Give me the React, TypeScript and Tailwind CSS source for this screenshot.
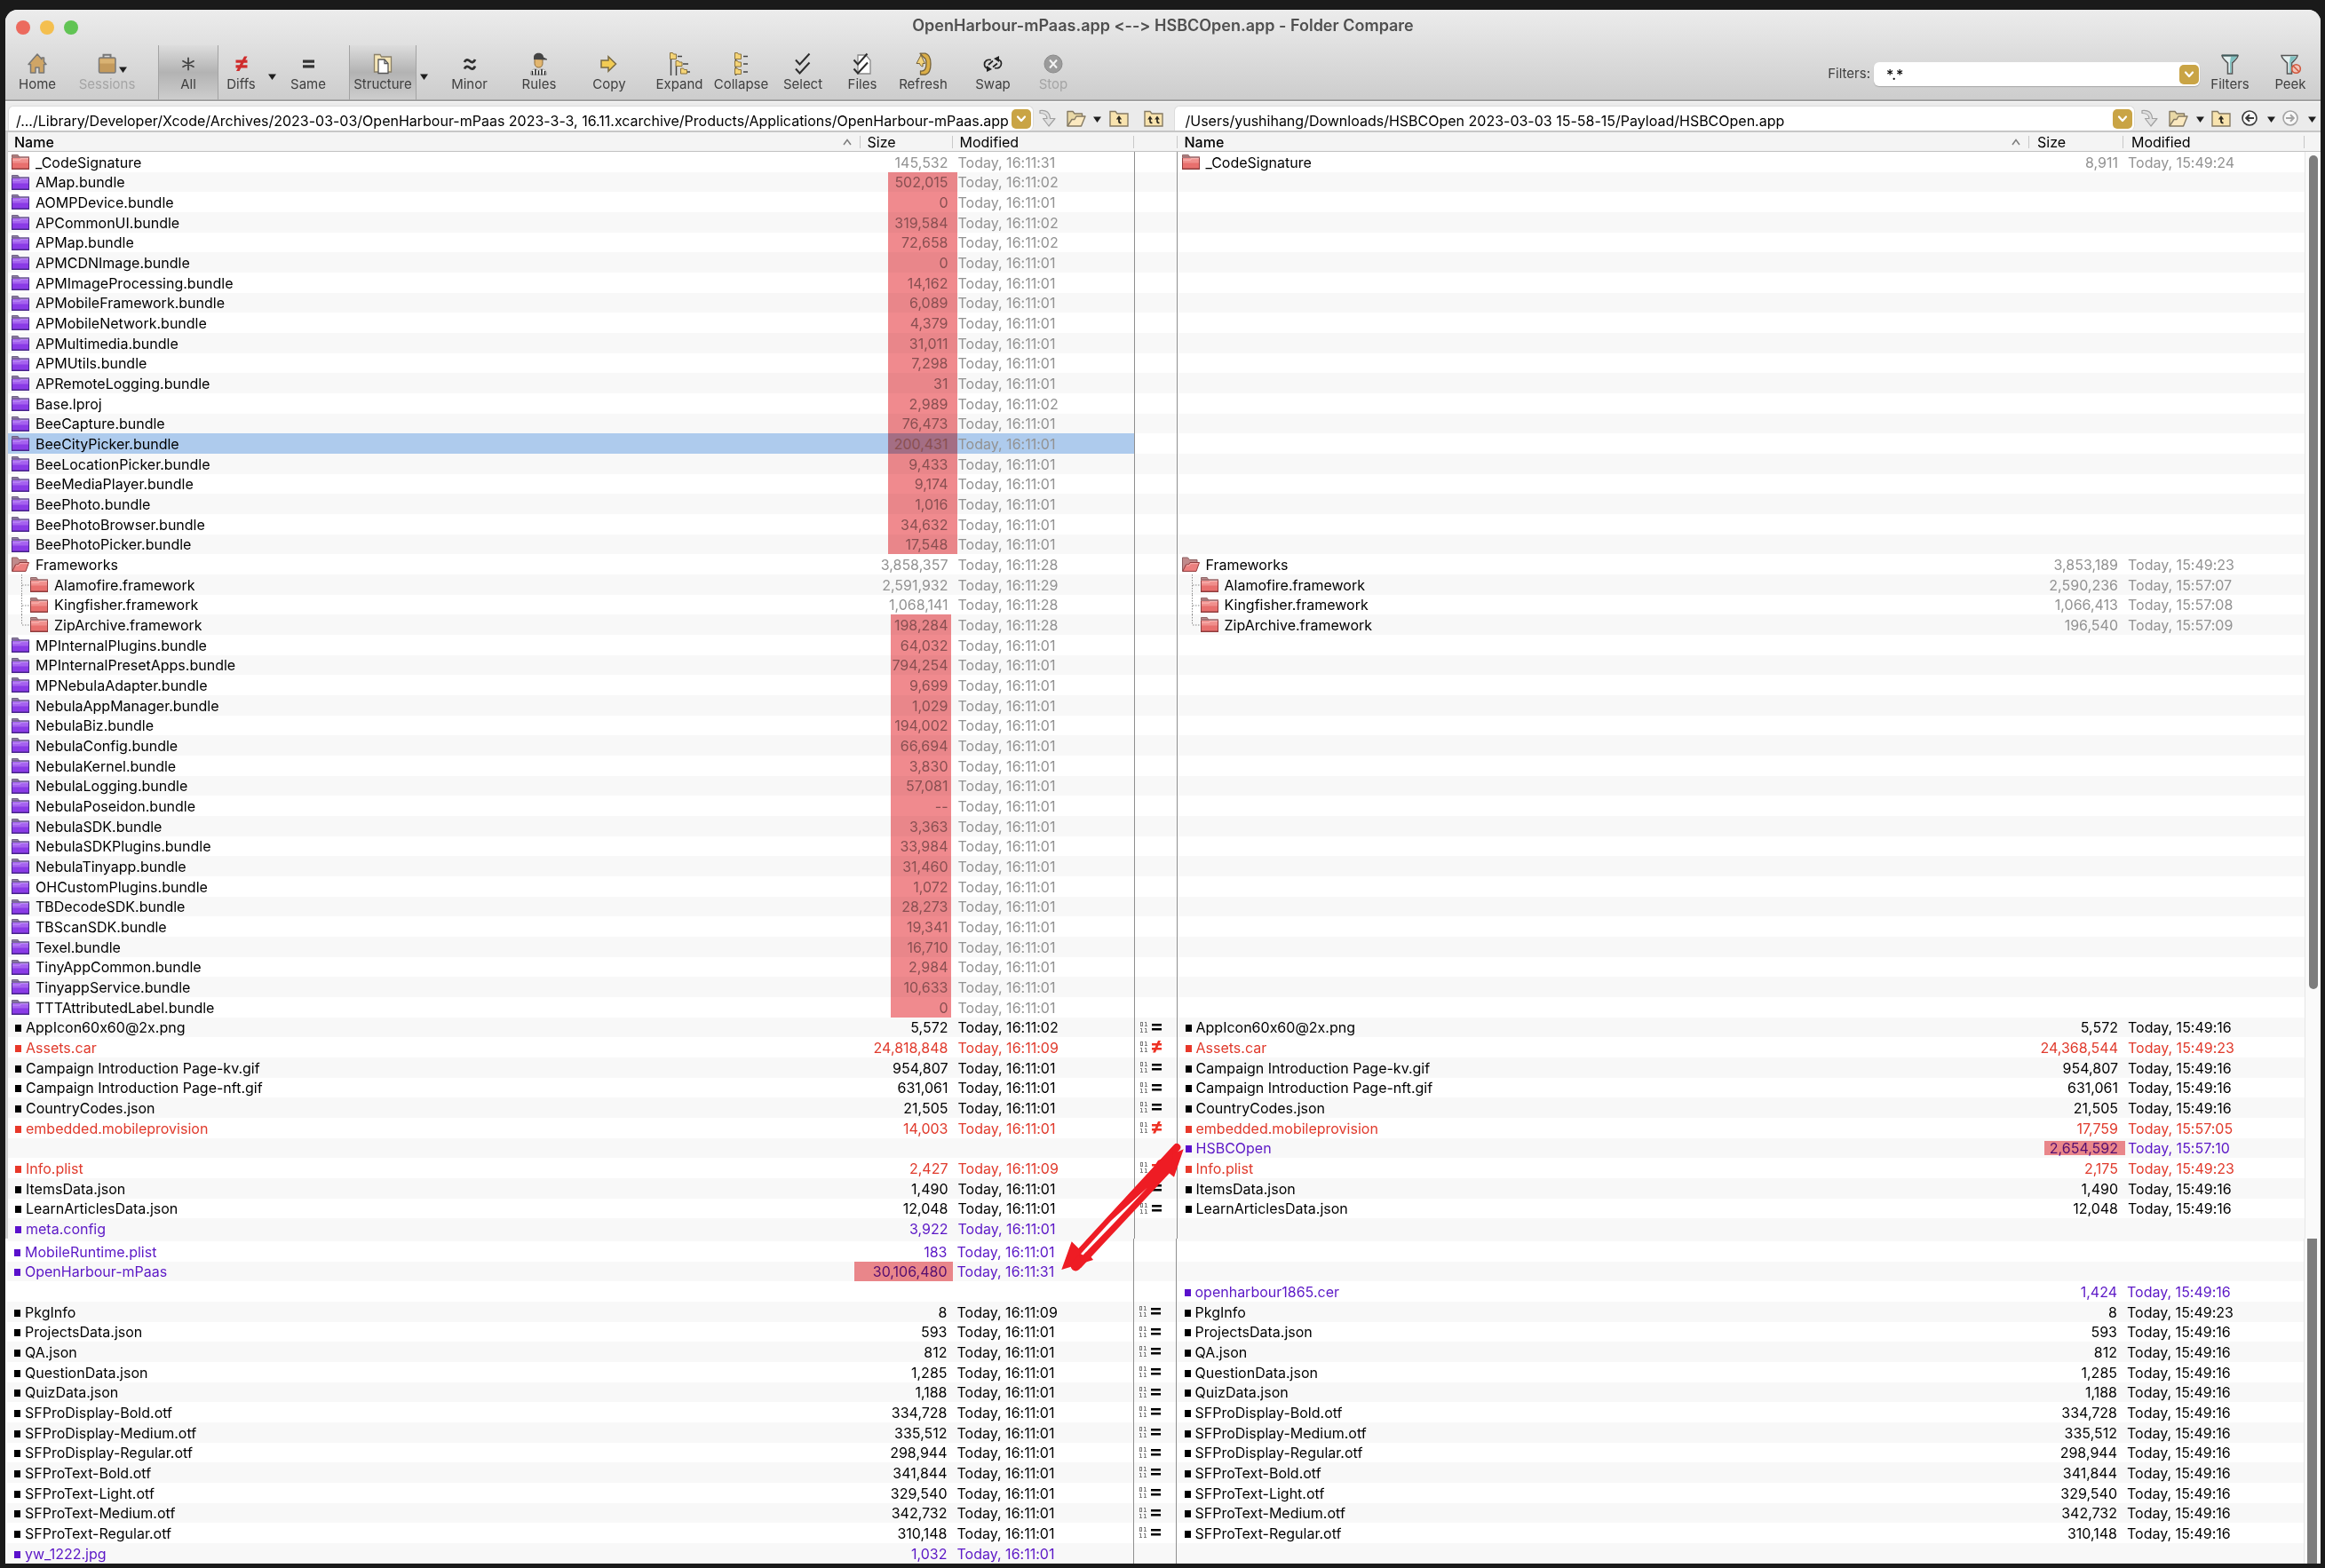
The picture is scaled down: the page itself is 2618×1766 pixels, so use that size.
import React from "react";

type Tone = "dim" | "black" | "red" | "purple";
type Entry = {
  name: string;
  kind: "same" | "only" | "open" | "child" | "last" | "file";
  size: string;
  time: string;
  tone: Tone;
};
type Row = { left?: Entry; right?: Entry; mark?: "eq" | "ne"; hl?: "wide" | "narrow" | "big"; hlRight?: boolean; selected?: boolean; arrow?: boolean };

const TONE: Record<Tone, string> = {
  dim: "text-[#929292]",
  black: "text-black",
  red: "text-[#e03a2c]",
  purple: "text-[#5b17c6]",
};
const BULLET: Record<Tone, string> = {
  dim: "bg-black",
  black: "bg-black",
  red: "bg-[#e8382a]",
  purple: "bg-[#5a10cc]",
};

const bundle = (name: string, size: string, time: string, hl: Row["hl"]): Row => ({
  left: { name, size, time: `Today, 16:11:${time}`, kind: "only", tone: "dim" },
  hl,
});
const shared = (
  name: string,
  kind: Entry["kind"],
  l: [string, string],
  r: [string, string],
  hl?: Row["hl"],
): Row => ({
  left: { name, kind, size: l[0], time: `Today, 16:11:${l[1]}`, tone: "dim" },
  right: { name, kind, size: r[0], time: `Today, 15:${r[1]}`, tone: "dim" },
  hl,
});
const same = (name: string, size: string, lt = "01", rt = "49:16"): Row => ({
  left: { name, kind: "file", size, time: `Today, 16:11:${lt}`, tone: "black" },
  right: { name, kind: "file", size, time: `Today, 15:${rt}`, tone: "black" },
  mark: "eq",
});
const diff = (name: string, ls: string, lt: string, rs: string, rt: string): Row => ({
  left: { name, kind: "file", size: ls, time: `Today, 16:11:${lt}`, tone: "red" },
  right: { name, kind: "file", size: rs, time: `Today, 15:${rt}`, tone: "red" },
  mark: "ne",
});
const orphan = (name: string, size: string, time: string): Entry => ({ name, kind: "file", size, time: `Today, ${time}`, tone: "purple" });

const UPPER: Row[] = [
  shared("_CodeSignature", "same", ["145,532", "31"], ["8,911", "49:24"]),
  bundle("AMap.bundle", "502,015", "02", "wide"),
  bundle("AOMPDevice.bundle", "0", "01", "wide"),
  bundle("APCommonUI.bundle", "319,584", "02", "wide"),
  bundle("APMap.bundle", "72,658", "02", "wide"),
  bundle("APMCDNImage.bundle", "0", "01", "wide"),
  bundle("APMImageProcessing.bundle", "14,162", "01", "wide"),
  bundle("APMobileFramework.bundle", "6,089", "01", "wide"),
  bundle("APMobileNetwork.bundle", "4,379", "01", "wide"),
  bundle("APMultimedia.bundle", "31,011", "01", "wide"),
  bundle("APMUtils.bundle", "7,298", "01", "wide"),
  bundle("APRemoteLogging.bundle", "31", "01", "wide"),
  bundle("Base.lproj", "2,989", "02", "wide"),
  bundle("BeeCapture.bundle", "76,473", "01", "wide"),
  { ...bundle("BeeCityPicker.bundle", "200,431", "01", "wide"), selected: true },
  bundle("BeeLocationPicker.bundle", "9,433", "01", "wide"),
  bundle("BeeMediaPlayer.bundle", "9,174", "01", "wide"),
  bundle("BeePhoto.bundle", "1,016", "01", "wide"),
  bundle("BeePhotoBrowser.bundle", "34,632", "01", "wide"),
  bundle("BeePhotoPicker.bundle", "17,548", "01", "wide"),
  shared("Frameworks", "open", ["3,858,357", "28"], ["3,853,189", "49:23"]),
  shared("Alamofire.framework", "child", ["2,591,932", "29"], ["2,590,236", "57:07"]),
  shared("Kingfisher.framework", "child", ["1,068,141", "28"], ["1,066,413", "57:08"]),
  shared("ZipArchive.framework", "last", ["198,284", "28"], ["196,540", "57:09"], "narrow"),
  bundle("MPInternalPlugins.bundle", "64,032", "01", "narrow"),
  bundle("MPInternalPresetApps.bundle", "794,254", "01", "narrow"),
  bundle("MPNebulaAdapter.bundle", "9,699", "01", "narrow"),
  bundle("NebulaAppManager.bundle", "1,029", "01", "narrow"),
  bundle("NebulaBiz.bundle", "194,002", "01", "narrow"),
  bundle("NebulaConfig.bundle", "66,694", "01", "narrow"),
  bundle("NebulaKernel.bundle", "3,830", "01", "narrow"),
  bundle("NebulaLogging.bundle", "57,081", "01", "narrow"),
  bundle("NebulaPoseidon.bundle", "--", "01", "narrow"),
  bundle("NebulaSDK.bundle", "3,363", "01", "narrow"),
  bundle("NebulaSDKPlugins.bundle", "33,984", "01", "narrow"),
  bundle("NebulaTinyapp.bundle", "31,460", "01", "narrow"),
  bundle("OHCustomPlugins.bundle", "1,072", "01", "narrow"),
  bundle("TBDecodeSDK.bundle", "28,273", "01", "narrow"),
  bundle("TBScanSDK.bundle", "19,341", "01", "narrow"),
  bundle("Texel.bundle", "16,710", "01", "narrow"),
  bundle("TinyAppCommon.bundle", "2,984", "01", "narrow"),
  bundle("TinyappService.bundle", "10,633", "01", "narrow"),
  bundle("TTTAttributedLabel.bundle", "0", "01", "narrow"),
  same("AppIcon60x60@2x.png", "5,572", "02"),
  diff("Assets.car", "24,818,848", "09", "24,368,544", "49:23"),
  same("Campaign Introduction Page-kv.gif", "954,807"),
  same("Campaign Introduction Page-nft.gif", "631,061"),
  same("CountryCodes.json", "21,505"),
  diff("embedded.mobileprovision", "14,003", "01", "17,759", "57:05"),
  { right: orphan("HSBCOpen", "2,654,592", "15:57:10"), hlRight: true, arrow: true },
  diff("Info.plist", "2,427", "09", "2,175", "49:23"),
  same("ItemsData.json", "1,490"),
  same("LearnArticlesData.json", "12,048"),
  { left: orphan("meta.config", "3,922", "16:11:01") },
];

const LOWER: Row[] = [
  { left: orphan("MobileRuntime.plist", "183", "16:11:01") },
  { left: orphan("OpenHarbour-mPaas", "30,106,480", "16:11:31"), hl: "big" },
  { right: orphan("openharbour1865.cer", "1,424", "15:49:16") },
  same("PkgInfo", "8", "09", "49:23"),
  same("ProjectsData.json", "593"),
  same("QA.json", "812"),
  same("QuestionData.json", "1,285"),
  same("QuizData.json", "1,188"),
  same("SFProDisplay-Bold.otf", "334,728"),
  same("SFProDisplay-Medium.otf", "335,512"),
  same("SFProDisplay-Regular.otf", "298,944"),
  same("SFProText-Bold.otf", "341,844"),
  same("SFProText-Light.otf", "329,540"),
  same("SFProText-Medium.otf", "342,732"),
  same("SFProText-Regular.otf", "310,148"),
  { left: orphan("yw_1222.jpg", "1,032", "16:11:01") },
];

function FolderIcon({ color }: { color: "red" | "purple" }) {
  const red = color === "red";
  return (
    <svg className="h-[17px] w-5 shrink-0" viewBox="0 0 20 17">
      <path d="M.5 .5h6.700l2 3.300H.5z" fill={red ? "#b98c8c" : "#94829f"} stroke={red ? "#8d6465" : "#6d6085"} strokeWidth="1" />
      <rect x="0" y="2.500" width="20" height="14.500" fill={red ? "#8e3b3c" : "#47258a"} />
      <rect x="0" y="2.500" width="19.500" height="1.500" fill={red ? "#a67a7c" : "#7d6c9c"} />
      <rect x="1" y="4" width="18" height="6" fill={red ? "#f08f8c" : "#a562ef"} />
      <rect x="1" y="9.500" width="18" height="6" fill={red ? "#e8706e" : "#8a3be6"} />
      <path d="M1 5.500h8l1.500-1.500H19v1.200h-8L9.500 6.700H1z" fill={red ? "#f7b3b0" : "#bb8af5"} />
    </svg>
  );
}

function OpenFolderIcon() {
  return (
    <svg className="h-[17px] w-5 shrink-0" viewBox="0 0 20 17">
      <path d="M.5 16.500V1h6l2 2.500h8.500V8" fill="#c08a8b" stroke="#8d5f60" />
      <path d="M.8 16.400 4.500 9l3-.2 1.500-2.300h10.500L16 16.400z" fill="#ec7f7e" stroke="#8e3b3c" />
      <path d="M5 10l3-.1 1.600-2.200h8.600" fill="none" stroke="#f7b3b0" />
    </svg>
  );
}

function TreeLine({ last }: { last: boolean }) {
  return (
    <svg className="h-[23px] w-[10px] shrink-0" viewBox="0 0 10 23">
      <path d={last ? "M.5 0v12" : "M.5 0v23"} stroke="#8a8a8a" strokeDasharray="1.500 1.500" />
      <path d="M1 12h9" stroke="#8a8a8a" strokeDasharray="1.500 1.500" />
    </svg>
  );
}

function NameCell({ entry, pad }: { entry?: Entry; pad: string }) {
  if (!entry) return null;
  const { kind, name, tone } = entry;
  if (kind === "file")
    return (
      <div className={`flex items-center gap-[5px] ${pad}`}>
        <span className={`mt-0.5 ml-1 h-2 w-[7px] shrink-0 ${BULLET[tone]}`} />
        <span className={TONE[tone]}>{name}</span>
      </div>
    );
  return (
    <div className={`flex items-center gap-[7px] text-black ${pad}`}>
      {kind === "child" || kind === "last" ? (
        <span className="-my-1 ml-[11px] flex items-center">
          <TreeLine last={kind === "last"} />
          <FolderIcon color="red" />
        </span>
      ) : kind === "open" ? (
        <OpenFolderIcon />
      ) : (
        <FolderIcon color={kind === "only" ? "purple" : "red"} />
      )}
      <span>{name}</span>
    </div>
  );
}

function Mark({ type }: { type: "eq" | "ne" }) {
  return (
    <svg className="ml-[5px] block h-[17px] w-[26px]" viewBox="0 0 26 17" role="img" aria-label={type === "eq" ? "Binary same" : "Binary different"}>
      <g fill="none" stroke="#7c7c7c" strokeWidth="1" shapeRendering="crispEdges">
        <rect x="1.500" y="2.500" width="2" height="4" />
        <path d="M7.500 2v5M6 2.500h2M6 6.500h3M2.500 9v5M1 9.500h2M1 13.500h3M7.500 9v5M6 9.500h2M6 13.500h3" />
      </g>
      {type === "eq" ? (
        <path d="M14 4h11v2.500H14zM14 9h11v2.500H14z" fill="#000" />
      ) : (
        <path d="M14 4h11v2.500H14zM14 9h11v2.500H14zM21 1h3L18 14.500h-3z" fill="#ee3224" />
      )}
    </svg>
  );
}

function Arrow() {
  return (
    <svg className="pointer-events-none absolute top-[3px] left-[-87px] z-10 h-[150px] w-[150px] max-w-none" viewBox="0 0 150 150">
      <g fill="#ee1c24">
        <path d="M4.300 145 15.700 113.300 23.500 121 131 4.200A4.300 4.300 0 0 1 137.500 9.800L34 126l6 8z" />
        <path d="M141.700 9.300 131 40.700 124 35 24.500 144.500A5 5 0 0 1 16 137L112 34l-5-3 6-9z" />
        <path d="M24 121 130 6 128 34 26 143z" />
      </g>
      <path d="M26 127.300 60 90 101 52.500 62 94 28.500 128.500z" fill="#fff" />
    </svg>
  );
}

const HL = {
  wide: "left-[31px] right-[-5px] inset-y-0",
  narrow: "left-[34px] right-[2px] inset-y-0",
  big: "left-[-6px] right-[-1px] inset-y-0",
};

function Cols() {
  return (
    <colgroup>
      <col />
      <col className="w-[104px]" />
      <col className="w-[204px]" />
      <col className="w-[49px]" />
      <col />
      <col className="w-[106px]" />
      <col className="w-[204px]" />
    </colgroup>
  );
}

function Rows({ rows }: { rows: Row[] }) {
  return (
    <tbody>
      {rows.map((row, i) => {
        const sel = row.selected ? "bg-[#aecbed]" : "";
        return (
          <tr key={i} className="h-[23px] leading-[22px] even:bg-[#f8f8f8] nth-[3n+2]:h-[22px]">
            <td className={sel}>
              <NameCell entry={row.left} pad="pl-1" />
            </td>
            <td className={`relative pr-[5px] text-right ${sel} ${row.left ? TONE[row.left.tone] : ""}`}>
              {row.left?.size}
              {row.hl && <span className={`absolute bg-[#f08a8e] mix-blend-multiply ${HL[row.hl]}`} />}
            </td>
            <td className={`pl-[6px] ${sel} ${row.left ? TONE[row.left.tone] : ""}`}>{row.left?.time}</td>
            <td className="relative border-x border-[#8f8f8f]">
              {row.mark && <Mark type={row.mark} />}
              {row.arrow && <Arrow />}
            </td>
            <td>
              <NameCell entry={row.right} pad="pl-[5px]" />
            </td>
            <td className={`relative pr-[6px] text-right ${row.right ? TONE[row.right.tone] : ""}`}>
              {row.right?.size}
              {row.hlRight && <span className="absolute top-[3px] right-[-2px] bottom-[3px] left-[17px] bg-[#f08a8e] mix-blend-multiply" />}
            </td>
            <td className={`pl-[5px] ${row.right ? TONE[row.right.tone] : ""}`}>{row.right?.time}</td>
          </tr>
        );
      })}
    </tbody>
  );
}

function Head({ label, sorted = false, pad }: { label: string; sorted?: boolean; pad: string }) {
  return (
    <th scope="col" className="text-left font-normal">
      <div className={`flex h-[22px] items-center border-b border-[#c2c2c2] bg-[#f4f4f4] ${pad} ${sorted ? "font-medium" : ""}`}>
        <span className="flex-1">{label}</span>
        {sorted && (
          <svg className="mr-[9px] h-2 w-[10px]" viewBox="0 0 10 8" fill="none" stroke="#7c7c7c" strokeWidth="1.500">
            <path d="m1 7 4-5.500L9 7" />
          </svg>
        )}
        <span className="h-[14px] w-px bg-[#c8c8c8]" />
      </div>
    </th>
  );
}

function Caret() {
  return (
    <svg className="h-[7px] w-[9px]" viewBox="0 0 9 7">
      <path d="M0 .5h9L4.500 7z" fill="#1e1e1e" />
    </svg>
  );
}

function ToolButton({ label, width, icon, disabled, active }: { label: string; width: string; icon: React.ReactNode; disabled?: boolean; active?: boolean }) {
  return (
    <button
      type="button"
      disabled={disabled}
      aria-pressed={active}
      className={`flex h-[61px] shrink-0 flex-col items-center pt-[9px] text-[15px] leading-5 ${width} ${disabled ? "text-[#a5a5a5]" : "text-[#3f3f3f]"} ${
        active ? "bg-linear-to-b from-[#dddddd] via-[#b3b3b3] to-[#cdcdcd] shadow-[inset_1px_0_0_#a3a3a3,inset_-1px_0_0_#a3a3a3]" : ""
      }`}
    >
      <span className="flex h-6 items-center justify-center">{icon}</span>
      <span className="mt-px">{label}</span>
    </button>
  );
}

const svg = "h-[26px] w-[26px]";
const I = {
  home: (
    <svg className={svg} viewBox="0 0 26 26">
      <path d="M13 2 3 13.500h2.500V23H11v-6h4v6h5.500v-9.500H23l-2.500-3V6H18v1.800z" fill="#cfa566" stroke="#777" strokeWidth="1.500" strokeLinejoin="round" />
    </svg>
  ),
  sessions: (
    <svg className={svg} viewBox="0 0 26 26">
      <path d="M8.500 6V2.800h8V6" fill="none" stroke="#777" strokeWidth="2" />
      <rect x="3.500" y="6" width="18.500" height="17" rx="1.500" fill="#c49a5c" stroke="#7a7a7a" strokeWidth="1.500" />
      <path d="M4.500 7.500h16.500v5h-16.500z" fill="#d9b273" />
    </svg>
  ),
  all: (
    <svg className={svg} viewBox="0 0 26 26" stroke="#444" strokeWidth="1.800" strokeLinecap="round">
      <path d="M13 6.500v13M7 9.800l12 6.400M19 9.800 7 16.200" />
    </svg>
  ),
  diffs: (
    <svg className={svg} viewBox="0 0 26 26" fill="#cf2d2d">
      <path d="M6.500 8.500h13v3.300h-13zM6.500 14.300h13v3.300h-13zM16 4.500h3.500L10.500 21H7z" />
    </svg>
  ),
  same: (
    <svg className={svg} viewBox="0 0 26 26" fill="#333">
      <path d="M7 8.500h13v3.200H7zM7 14.300h13v3.200H7z" />
    </svg>
  ),
  structure: (
    <svg className={svg} viewBox="0 0 26 26" stroke="#8a8068" strokeWidth="1.300">
      <path d="M3.500 22V2.500H10l1.500 2.500h11V22z" fill="#f5e6b8" />
      <path d="M8 8h7l4 4.500v11H8z" fill="#fff" stroke="#555" />
      <path d="M15 8v4.500h4" fill="none" stroke="#555" />
    </svg>
  ),
  minor: (
    <svg className={svg} viewBox="0 0 26 26" fill="none" stroke="#2f2f2f" strokeWidth="2.800">
      <path d="M7 11c1.500-3.500 4-3 6-1.200s4.500 2 6-1.800M7 18.500c1.500-3.500 4-3 6-1.200s4.500 2 6-1.800" />
    </svg>
  ),
  rules: (
    <svg className={svg} viewBox="0 0 26 26">
      <path d="M8 6h9v6.500c0 3-2 4.500-4.500 4.500S8 15 8 12.500z" fill="#e2b66f" stroke="#8a6a3a" />
      <path d="M7 8V5.500C7 2.500 9.500.8 12.500.8S18 2.500 18 5.500l4 2v1z" fill="#444" />
      <path d="M3.500 25c0-4 2-6 6-6.500l3 2 3-2c4 .5 6 2.500 6 6.500z" fill="#fff" stroke="#777" strokeWidth=".6" />
      <path d="M5.500 21v4.500M9 19v6.500M12.500 20.500v5M16 19v6.500M19.500 21v4.500" stroke="#222" strokeWidth="1.600" />
    </svg>
  ),
  copy: (
    <svg className={svg} viewBox="0 0 26 26">
      <path d="M4 9h8V4.800l8.500 8.200-8.500 8.200V17H4z" fill="#f2cb53" stroke="#7a6a42" strokeWidth="1.500" />
    </svg>
  ),
  expand: (
    <svg className={svg} viewBox="0 0 26 26">
      <path d="M3.500 8v18M9.500 15v11M11 4.500h5M17 13h6M22 22h3" stroke="#444" strokeWidth="1.500" />
      <g fill="#f4d376" stroke="#8a733c">
        <path d="M2.500 7.500v-7h3l1 1.500h3v5.500zM9 15.500v-6h3l1 1.500h3v4.500zM14.500 24v-6h3l1 1.500h3V24z" />
      </g>
    </svg>
  ),
  collapse: (
    <svg className={svg} viewBox="0 0 26 26">
      <path d="M6.500 6v20M15 4.500h5M15 13h5M15 22h5" stroke="#444" strokeWidth="1.500" />
      <g fill="#f4d376" stroke="#8a733c">
        <path d="M5.500 7.500v-7h3l1 1.500h3v5.500zM5.500 16V9.500h3L9.500 11h3v5zM5.500 24.500V18h3l1 1.500h3v5z" />
      </g>
    </svg>
  ),
  select: (
    <svg className={svg} viewBox="0 0 26 26" fill="none" stroke="#2c2c2c" strokeWidth="2">
      <path d="m5 8.500 4.500 5L20.500 1.500M5 18.500l4.500 5 11-12" />
    </svg>
  ),
  files: (
    <svg className={svg} viewBox="0 0 26 26" fill="none" stroke="#2c2c2c" strokeWidth="2">
      <path d="M8 3h9l5 6v15H8z" fill="#fff" stroke="#888" strokeWidth="1.300" />
      <path d="m3.500 8.500 4.500 5L18.500 1.500M3.500 18.500l4.500 5 11-12" />
    </svg>
  ),
  refresh: (
    <svg className={svg} viewBox="0 0 26 26">
      <path d="M9 1.200h6c4 1 6 5 6 11.800s-2 11-6 12H9.500v-4c5 .5 6.500-3 6.500-8s-.5-6.500-2.500-7z" fill="#dcaf47" stroke="#75623a" strokeWidth="1.300" strokeLinejoin="round" />
      <path d="M5 12.500h3.500c.5 2 1.500 3 3.500 3.500v-3.500h2.500L10 3z" fill="#f2d27a" stroke="#75623a" strokeLinejoin="round" />
    </svg>
  ),
  swap: (
    <svg className={svg} viewBox="0 0 26 26" fill="none" stroke="#222" strokeWidth="1.700">
      <path d="M11 8.500c-4.500-1-7.500 1.500-7.500 5 0 2.500 1.500 4 4 4.500M15 17.500c4.500 1 7.500-1.500 7.500-5 0-2.500-1.500-4-4-4.500M8 14l5-4.500M13 16.500l5-4" />
      <path d="M6 15v7l6-3zM20 11V4l-6 3z" fill="#222" stroke="none" />
    </svg>
  ),
  stop: (
    <svg className={svg} viewBox="0 0 26 26">
      <circle cx="13" cy="13" r="10" fill="#9b9b9b" stroke="#8a8a8a" />
      <path d="m9 8.500 8 9M17 8.500l-8 9" stroke="#f4f4f4" strokeWidth="2" />
    </svg>
  ),
  filters: (
    <svg className={svg} viewBox="0 0 26 26">
      <path d="M4 3.500h18c-.5 4-5 6.500-6.500 8.500v12h-5V12C9 10 4.500 7.500 4 3.500z" fill="#e4f1f1" stroke="#565656" strokeWidth="1.600" />
      <path d="M14 4.500h7c-1 3-5 5-6.500 7.500v11H13V11z" fill="#7fc0c0" />
      <path d="M4 3.500h18" stroke="#3f5a5a" strokeWidth="2" />
    </svg>
  ),
  peek: (
    <svg className={svg} viewBox="0 0 26 26">
      <path d="M3 3.500h18c-.5 4-5 6.500-6.500 8.500v12h-5V12C8 10 3.500 7.500 3 3.500z" fill="#e4f1f1" stroke="#565656" strokeWidth="1.600" />
      <path d="M13 4.500h7c-1 3-5 5-6.500 7.500v11H12V11z" fill="#7fc0c0" />
      <circle cx="19.500" cy="18.500" r="4.800" fill="#f2c4b8" stroke="#d0573c" strokeWidth="1.600" />
      <path d="m16 15 7 7" stroke="#d0573c" strokeWidth="1.600" />
    </svg>
  ),
};

function DropButton({ label }: { label: string }) {
  return (
    <button type="button" aria-label={label} className="flex h-[22px] w-[22px] shrink-0 items-center justify-center rounded-[5px] bg-[#c9a445]">
      <svg className="h-[8px] w-[12px]" viewBox="0 0 12 8" fill="none" stroke="#fff" strokeWidth="2.200" strokeLinecap="round" strokeLinejoin="round">
        <path d="m2 1.500 4 4.500 4-4.500" />
      </svg>
    </button>
  );
}

function PathField({ label, value, pad }: { label: string; value: string; pad: string }) {
  return (
    <div className="flex h-[28px] min-w-0 flex-1 items-center rounded-t-[6px] rounded-br-[6px] border border-b-0 border-[#dcdcdc] bg-white pr-0.5">
      <input aria-label={label} defaultValue={value} className={`mt-[5px] h-[22px] min-w-0 flex-1 bg-transparent text-[16px] leading-[22px] text-black outline-none ${pad}`} />
      <DropButton label={`${label} history`} />
    </div>
  );
}

function IconButton({ label, className, children }: { label: string; className: string; children: React.ReactNode }) {
  return (
    <button type="button" aria-label={label} className={`flex h-5 shrink-0 items-center justify-center ${className}`}>
      {children}
    </button>
  );
}

const CurveArrow = (
  <svg className="h-5 w-5" viewBox="0 0 20 20">
    <path d="M1 1.500c7-1 11 2 11.500 9H18l-7 8.500-6.500-8.500h4.500C9 7 6 4.500 1 4.500z" fill="#e0e0e0" stroke="#a0a0a0" strokeWidth="1.200" strokeLinejoin="round" />
  </svg>
);
const OpenPath = (
  <svg className="h-[19px] w-[22px]" viewBox="0 0 22 19" stroke="#857a63" strokeWidth="1.400" strokeLinejoin="round">
    <path d="M1 18V1.500h6L9 4h8.500v3" fill="#e9d8a6" />
    <path d="M1 18 6 10.500h3L11 7h10l-4.500 11z" fill="#fbe9c0" />
  </svg>
);
function UpFolder({ double = false }: { double?: boolean }) {
  return (
    <svg className="h-[19px] w-[22px]" viewBox="0 0 22 19">
      <path d="M1 18V1.500h6L9 4h12v14z" fill="#f8e3ae" stroke="#857a63" strokeWidth="1.400" />
      {double ? (
        <g fill="none" stroke="#2e2a20" strokeWidth="1.700">
          <path d="M7 8v4.500c0 1.500.5 2 2.500 2M15 8v4.500c0 1.500.5 2 2.500 2" />
          <path d="M4.200 10.500 7 6.500l2.800 4zM12.200 10.500l2.800-4 2.800 4z" fill="#2e2a20" stroke="none" />
        </g>
      ) : (
        <g fill="none" stroke="#2e2a20" strokeWidth="1.900">
          <path d="M11 8v4.500c0 1.500.5 2 2.500 2" />
          <path d="M7.800 10.500 11 6l3.200 4.500z" fill="#2e2a20" stroke="none" />
        </g>
      )}
    </svg>
  );
}
function Nav({ dir, color }: { dir: "back" | "forward"; color: string }) {
  return (
    <svg className="h-[18px] w-[18px]" viewBox="0 0 18 18" fill="none" stroke={color}>
      <circle cx="9" cy="9" r="8" fill="#f8f8f8" strokeWidth="1.600" />
      <path d={dir === "back" ? "M14 9H6M9 5.200 5.200 9 9 12.800" : "M4 9h8M9 5.200 12.800 9 9 12.800"} strokeWidth="2" />
    </svg>
  );
}

export default function App() {
  return (
    <div className="min-h-screen bg-[#1a1a1a] pt-[11px] pr-[5px] pb-[3px] pl-[6px] font-[Inter,'Liberation_Sans',sans-serif] text-[16px] text-black [font-feature-settings:'calt'_0]">
      <main className="overflow-hidden rounded-t-[14px] bg-white">
        <header className="border-b-2 border-[#a2a2a2] bg-linear-to-b from-[#ececec] to-[#cdcdcd]">
          <div className="grid h-[40px] grid-cols-[1fr_auto_1fr] items-center">
            <div className="flex gap-[11px] pl-3">
              <button type="button" aria-label="Close" className="h-4 w-4 rounded-full bg-[#ec6a5e]" />
              <button type="button" aria-label="Minimize" className="h-4 w-4 rounded-full bg-[#f4bf4f]" />
              <button type="button" aria-label="Zoom" className="h-4 w-4 rounded-full bg-[#61c454]" />
            </div>
            <h1 className="pb-1 text-[18px] leading-6 font-semibold text-[#4f4f4f]">{"OpenHarbour-mPaas.app <--> HSBCOpen.app - Folder Compare"}</h1>
          </div>
          <div className="flex h-[61px]">
            <ToolButton label="Home" width="w-[72px]" icon={I.home} />
            <ToolButton
              label="Sessions"
              width="w-[85px]"
              disabled
              icon={
                <span className="ml-[10px] flex items-center">
                  {I.sessions}
                  <span className="mt-3">
                    <Caret />
                  </span>
                </span>
              }
            />
            <span className="w-[15px]" />
            <ToolButton label="All" width="w-[68px]" icon={I.all} active />
            <ToolButton label="Diffs" width="w-[51px]" icon={I.diffs} />
            <IconButton label="Diffs options" className="mt-[25px] w-[18px]">
              <Caret />
            </IconButton>
            <ToolButton label="Same" width="w-[64px]" icon={I.same} />
            <span className="w-[14px]" />
            <ToolButton label="Structure" width="w-[76px]" icon={I.structure} active />
            <IconButton label="Structure options" className="mt-[25px] w-4">
              <Caret />
            </IconButton>
            <ToolButton label="Minor" width="w-[87px]" icon={I.minor} />
            <ToolButton label="Rules" width="w-[70px]" icon={I.rules} />
            <ToolButton label="Copy" width="w-[88px]" icon={I.copy} />
            <ToolButton label="Expand" width="w-[70px]" icon={I.expand} />
            <ToolButton label="Collapse" width="w-[69px]" icon={I.collapse} />
            <ToolButton label="Select" width="w-[70px]" icon={I.select} />
            <ToolButton label="Files" width="w-[64px]" icon={I.files} />
            <ToolButton label="Refresh" width="w-[73px]" icon={I.refresh} />
            <ToolButton label="Swap" width="w-[84px]" icon={I.swap} />
            <ToolButton label="Stop" width="w-[52px]" icon={I.stop} disabled />
            <div className="mt-[19px] ml-auto flex h-[27px] items-center gap-1">
              <label htmlFor="filters" className="text-[15px] text-[#3f3f3f]">
                Filters:
              </label>
              <div className="flex h-[27px] w-[367px] items-center rounded-[6px] bg-white pr-px shadow-[0_1px_1px_#a8a8a8]">
                <input id="filters" defaultValue="*.*" className="min-w-0 flex-1 bg-transparent pl-[14px] text-[16px] font-medium text-black outline-none" />
                <DropButton label="Filter history" />
              </div>
            </div>
            <ToolButton label="Filters" width="w-[68px]" icon={I.filters} />
            <ToolButton label="Peek" width="w-[68px]" icon={I.peek} />
          </div>
        </header>

        <div className="grid grid-cols-2 border-t border-b-2 border-t-white border-b-[#c6c6c6] bg-[#ebebeb] pt-1">
          <div className="flex min-w-0 items-center pl-[3px]">
            <PathField label="Left path" pad="pl-2" value="/.../Library/Developer/Xcode/Archives/2023-03-03/OpenHarbour-mPaas 2023-3-3, 16.11.xcarchive/Products/Applications/OpenHarbour-mPaas.app" />
            <IconButton label="Go to path" className="ml-[6px] w-5">{CurveArrow}</IconButton>
            <IconButton label="Browse" className="ml-[11px] w-[22px]">{OpenPath}</IconButton>
            <IconButton label="Browse options" className="mt-[3px] ml-2 w-[10px]"><Caret /></IconButton>
            <IconButton label="Up one level" className="ml-2 w-[22px]"><UpFolder /></IconButton>
            <IconButton label="Both up one level" className="ml-[17px] w-[22px]"><UpFolder double /></IconButton>
          </div>
          <div className="flex min-w-0 items-center pr-[5px] pl-3">
            <PathField label="Right path" pad="pl-3" value="/Users/yushihang/Downloads/HSBCOpen 2023-03-03 15-58-15/Payload/HSBCOpen.app" />
            <IconButton label="Go to path" className="ml-[7px] w-5">{CurveArrow}</IconButton>
            <IconButton label="Browse" className="ml-[11px] w-[22px]">{OpenPath}</IconButton>
            <IconButton label="Browse options" className="mt-[3px] ml-2 w-[10px]"><Caret /></IconButton>
            <IconButton label="Up one level" className="ml-2 w-[22px]"><UpFolder /></IconButton>
            <IconButton label="Back" className="ml-3 w-[18px]"><Nav dir="back" color="#3a3a3a" /></IconButton>
            <IconButton label="Back options" className="mt-[3px] ml-[10px] w-[10px]"><Caret /></IconButton>
            <IconButton label="Forward" className="ml-2 w-[18px]"><Nav dir="forward" color="#a3a3a3" /></IconButton>
            <IconButton label="Forward options" className="mt-[3px] ml-[10px] w-[10px]"><Caret /></IconButton>
          </div>
        </div>

        <section className="flex border-l-[3px] border-[#cfcfcf]">
          <div className="min-w-0 flex-1">
            <table className="w-full table-fixed border-separate border-spacing-0 whitespace-nowrap">
              <Cols />
              <thead className="text-[16px] leading-5">
                <tr>
                  <Head label="Name" sorted pad="pl-[7px]" />
                  <Head label="Size" pad="pl-2" />
                  <Head label="Modified" pad="pl-2" />
                  <Head label="" pad="" />
                  <Head label="Name" sorted pad="pl-2" />
                  <Head label="Size" pad="pl-[9px]" />
                  <Head label="Modified" pad="pl-[9px]" />
                </tr>
              </thead>
              <Rows rows={UPPER} />
            </table>
          </div>
          <div className="flex w-[18px] flex-col">
            <div className="h-[22px] border-b border-[#c2c2c2] bg-[#f4f4f4]" />
            <div className="flex flex-1 justify-center border-l border-[#e6e6e6] bg-[#fafafa] pt-1">
              <div className="h-[77%] w-[10px] rounded-full bg-[#7d7d7d]" />
            </div>
          </div>
        </section>

        <section className="flex border-l-2 border-white">
          <div className="min-w-0 flex-1">
            <table className="w-full table-fixed border-separate border-spacing-0 whitespace-nowrap">
              <Cols />
              <thead aria-hidden="true">
                <tr className="h-[3px] bg-[#f8f8f8]">
                  <td />
                  <td />
                  <td />
                  <td className="border-x border-[#8f8f8f]" />
                  <td />
                  <td />
                  <td />
                </tr>
              </thead>
              <Rows rows={LOWER} />
            </table>
          </div>
          <div className="flex w-[19px] justify-center border-l border-[#e6e6e6] bg-[#fafafa] pr-px">
            <div className="w-[11px] bg-[#7d7d7d]" />
          </div>
        </section>
      </main>
    </div>
  );
}
